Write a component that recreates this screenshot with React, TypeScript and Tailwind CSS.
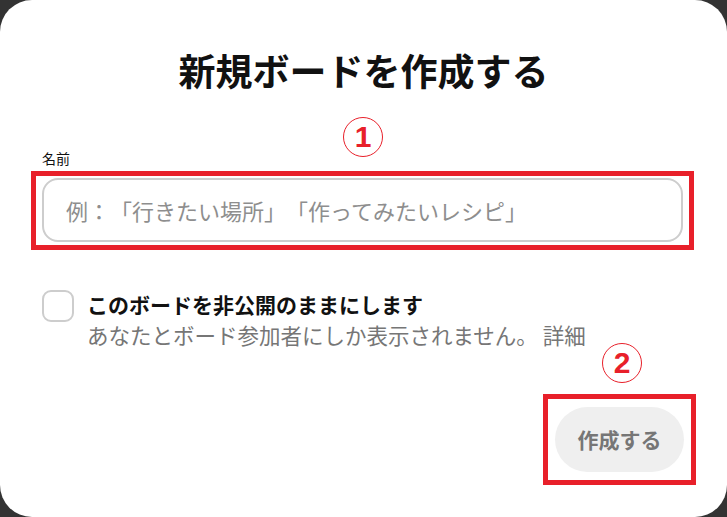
import { useState } from "react";

const FONT = "font-['Noto_Sans_CJK_JP','Noto_Sans',sans-serif]";

function Marker({ n }: { n: string }) {
    // red circled step number drawn over the screenshot
    return (
        <div className="flex h-[40px] w-[40px] items-center justify-center rounded-full border-[1.5px] border-[#e8202a] bg-white">
            <span className="text-[30px] font-black leading-none text-[#e8202a] font-['Liberation_Sans',sans-serif]">
                {n}
            </span>
        </div>
    );
}

export default function App() {
    const [isSecret, setIsSecret] = useState(false);
    const [name, setName] = useState("");

    return (
        <div className={`h-[517px] w-[727px] bg-[#333333] [text-spacing-trim:space-all] ${FONT}`}>
            <div className="flex h-full w-full flex-col rounded-[32px] bg-white">
                <h1 className="pt-[46px] text-center text-[37px] font-bold leading-[48px] text-[#111111]">
                    新規ボードを作成する
                </h1>

                <div className="relative mt-[51px] h-[20px] pl-[42px]">
                    <span className="text-[14px] leading-[20px] text-[#111111]">名前</span>
                    <div className="absolute left-[343px] top-[-28px]">
                        <Marker n="1" />
                    </div>
                </div>

                <div className="ml-[31px] mt-[6px] w-[663px] border-[5px] border-[#e8202a] pb-[3px] pl-[6px] pr-[6px] pt-[2px]">
                    <input
                        value={name}
                        onChange={(e) => setName(e.target.value)}
                        placeholder="例：「行きたい場所」「作ってみたいレシピ」"
                        className="h-[64px] w-full rounded-[16px] border-2 border-[#cdcdcd] px-[22px] text-[22px] text-[#111111] outline-none [text-spacing-trim:space-all] placeholder:text-[#8e8e8e]"
                    />
                </div>

                <div className="mt-[39px] flex items-start gap-[13px] pl-[42px]">
                    <button
                        onClick={() => setIsSecret((s) => !s)}
                        className={`mt-[1px] h-[32px] w-[32px] shrink-0 rounded-[9px] border-2 ${
                            isSecret ? "border-[#111111] bg-[#111111]" : "border-[#cdcdcd] bg-white"
                        }`}
                    />
                    <div className="flex flex-col">
                        <span className="text-[21px] font-bold leading-[30px] text-[#111111]">
                            このボードを非公開のままにします
                        </span>
                        <span className="text-[21.5px] leading-[32px] text-[#767676]">
                            あなたとボード参加者にしか表示されません。 詳細
                        </span>
                    </div>
                </div>

                <div className="mt-[-8px] flex justify-end pr-[85px]">
                    <Marker n="2" />
                </div>

                <div className="mt-[11px] flex justify-end pr-[31px]">
                    <div className="border-[5px] border-[#e8202a] px-[7px] py-[8px]">
                        <button className="h-[65px] w-[129px] rounded-full bg-[#efefef] text-[21px] font-bold text-[#767676]">
                            作成する
                        </button>
                    </div>
                </div>
            </div>
        </div>
    );
}
